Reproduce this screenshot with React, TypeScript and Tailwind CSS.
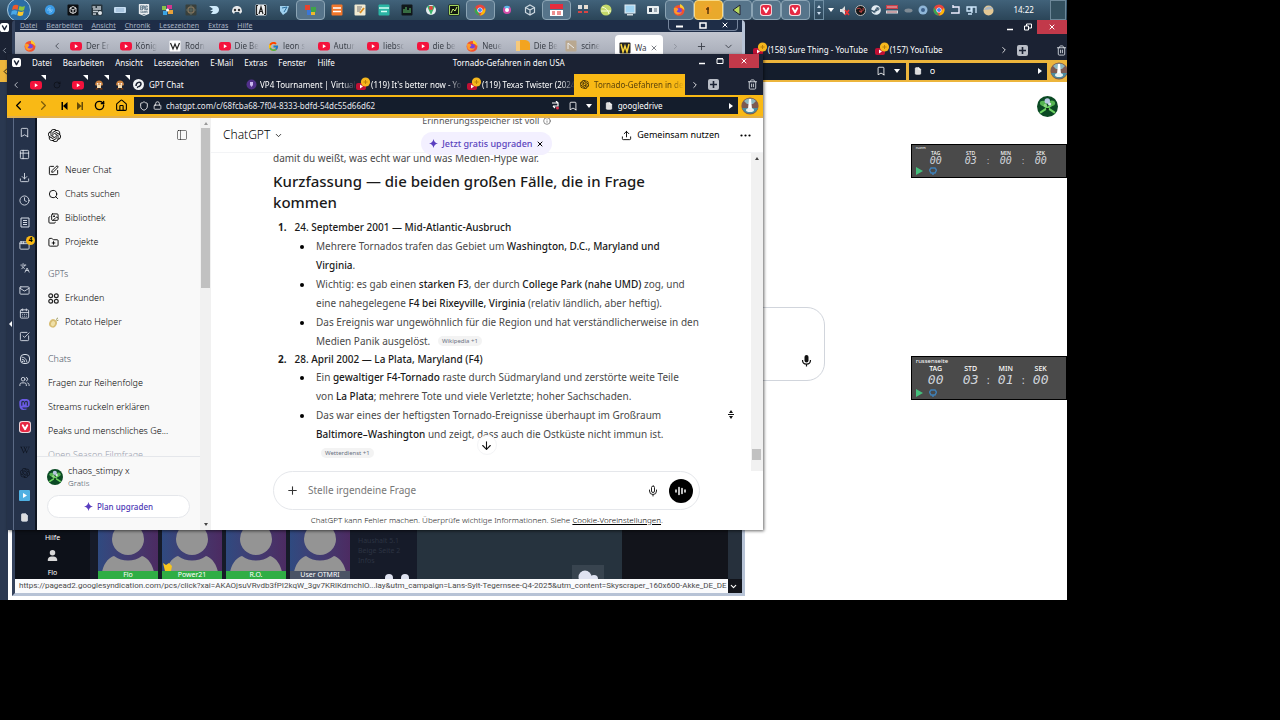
import type { ReactNode } from 'react';
import {
  AppWindow,
  ArrowDown,
  Bookmark,
  CalendarDays,
  CheckSquare,
  ChevronDown,
  ChevronLeft,
  ChevronRight,
  Clock,
  Download,
  File,
  FolderPlus,
  Home,
  Images,
  Info,
  Languages,
  Lock,
  Mail,
  Mic,
  PanelLeft,
  Plus,
  RotateCw,
  Rss,
  Search,
  Shield,
  SquarePen,
  Table2,
  Trash2,
  Upload,
  Users,
  X,
} from 'lucide-react';
import { SiEpicgames, SiMastodon, SiOpenai } from 'react-icons/si';
import { FaSteam, FaWikipediaW, FaUser } from 'react-icons/fa6';
import { FcGoogle } from 'react-icons/fc';

function YouTube({ size = 12 }: { size?: number }) {
  return (
    <svg width={size} height={size} viewBox="0 0 12 12" className="shrink-0">
      <rect x="0" y="2" width="12" height="8.4" rx="2.4" fill="#f4123c" />
      <path d="M4.8 4.2 8 6.2 4.8 8.2z" fill="#fff" />
    </svg>
  );
}

function Firefox() {
  return (
    <svg width="12" height="12" viewBox="0 0 12 12" className="shrink-0">
      <circle cx="6" cy="6.4" r="5.4" fill="#f4502c" />
      <path d="M7 0c2.6 1 4.6 3.4 4.4 6.6C9.6 4 8.4 4 7 3.6z" fill="#ffca2c" />
      <circle cx="6" cy="7" r="2.9" fill="#7542e0" />
      <path d="M.8 4.2C2 3.6 4 3.6 5.4 5.4L3.6 7.6C5 9 7.6 9 9 7c0 3-5.4 5-7.6 1.6z" fill="#ff9a2a" />
    </svg>
  );
}

function Chrome() {
  return (
    <svg width="12" height="12" viewBox="0 0 12 12" className="shrink-0">
      <circle cx="6" cy="6" r="5.5" fill="#e8453c" />
      <path d="M1.2 3.3 6 11.5A5.5 5.5 0 0 1 1.2 3.3z" fill="#34a853" />
      <path d="M11 3.8A5.5 5.5 0 0 1 6 11.5L8.6 7z" fill="#fbbc05" />
      <circle cx="6" cy="6" r="2.6" fill="#fff" />
      <circle cx="6" cy="6" r="2" fill="#4285f4" />
    </svg>
  );
}

function VivaldiTile() {
  return (
    <svg width="12" height="12" viewBox="0 0 13 13" className="shrink-0">
      <rect width="13" height="13" rx="3.5" fill="#f3dde0" />
      <rect x="1" y="1" width="11" height="11" rx="3" fill="#e62843" />
      <path d="M4 4.6 6.6 9 9 4.6" stroke="#fff" strokeWidth="2" strokeLinecap="round" strokeLinejoin="round" fill="none" />
    </svg>
  );
}

function VivaldiMark() {
  return (
    <svg width="9" height="9" viewBox="0 0 9 9" className="shrink-0">
      <rect width="9" height="9" rx="2.6" fill="#fff" />
      <path d="M2.5 3 4.5 6.6 6.5 3" stroke="#1b2233" strokeWidth="1.5" strokeLinecap="round" strokeLinejoin="round" fill="none" />
    </svg>
  );
}

// YouTube tab icon with the round yellow notification dot
function YouTubeAlert() {
  return (
    <svg width="16" height="16" viewBox="0 0 16 16" className="shrink-0">
      <rect x="1" y="6" width="10" height="7" rx="2" fill="#c01034" />
      <path d="M5 7.6 8 9.5 5 11.4z" fill="#fff" />
      <circle cx="10.5" cy="5" r="4.6" fill="#f6b71d" />
      <path d="M10.5 3v4M8.5 5h4" stroke="#b97f08" strokeWidth="1" />
    </svg>
  );
}

function Goomba() {
  return (
    <svg width="10" height="10" viewBox="0 0 10 10" className="shrink-0">
      <path d="M1 5C1 2 3 .6 5 .6S9 2 9 5c0 1-8 1-8 0z" fill="#c9803f" />
      <rect x="3" y="5" width="4" height="3" fill="#f5dcb0" />
      <path d="M1.4 9.4c0-2 3-2 3 0zM5.6 9.4c0-2 3-2 3 0z" fill="#7a3d12" />
      <circle cx="3.6" cy="3.8" r=".9" fill="#fff" />
      <circle cx="6.4" cy="3.8" r=".9" fill="#fff" />
    </svg>
  );
}

function Skull({ size = 20 }: { size?: number }) {
  return (
    <svg width={size} height={size} viewBox="0 0 20 20" className="shrink-0">
      <circle cx="10" cy="10" r="10" fill="#0b4a24" />
      <path d="M3.5 15.5 15 8M5 8l11.5 7.5" stroke="#6fd463" strokeWidth="2" strokeLinecap="round" />
      <ellipse cx="5.8" cy="6.8" rx="3" ry="2.2" fill="#56b552" />
      <ellipse cx="14.2" cy="6.8" rx="3" ry="2.4" fill="#56b552" />
      <circle cx="9.8" cy="4.8" r="2.6" fill="#b9c8e2" />
      <circle cx="12" cy="7.6" r="1.5" fill="#dbe4ef" />
      <circle cx="8" cy="9" r="1.6" fill="#8fd685" />
      <path d="M8.5 11.5h3l-.5 2h-2z" fill="#0d2e18" />
    </svg>
  );
}

function Lighthouse() {
  return (
    <svg width="18" height="18" viewBox="0 0 18 18" className="shrink-0">
      <circle cx="9" cy="9" r="8.6" fill="#7c5a52" />
      <path d="M1 11a8.6 8.6 0 0 0 16 0z" fill="#4b8ca0" />
      <path d="M3 4a8.6 8.6 0 0 1 12 0L12 7H6z" fill="#8eb7bf" />
      <path d="M8 2h2l1 10H7z" fill="#fff" />
      <ellipse cx="9" cy="13" rx="4" ry="2" fill="#e8f0f0" />
    </svg>
  );
}

function Spark({ size = 9 }: { size?: number }) {
  return (
    <svg width={size} height={size} viewBox="0 0 10 10" fill="#5a3fc0" className="shrink-0">
      <path d="M5 0c.7 3.2 1.8 4.3 5 5-3.2.7-4.3 1.8-5 5-.7-3.2-1.8-4.3-5-5 3.2-.7 4.3-1.8 5-5z" />
    </svg>
  );
}

function Potato() {
  return (
    <svg width="11" height="11" viewBox="0 0 11 11" className="shrink-0">
      <ellipse cx="5" cy="6.4" rx="3.8" ry="4.2" transform="rotate(25 5 6.4)" fill="#d8bd73" />
      <ellipse cx="5" cy="6.6" rx="2" ry="2.6" transform="rotate(25 5 6.6)" fill="#efe0a8" />
      <path d="M8 2.6 10 .8M8.6 3.6l1.8-.4" stroke="#8b8a4a" strokeWidth=".9" />
    </svg>
  );
}

function FourDots() {
  return (
    <svg width="11" height="11" viewBox="0 0 11 11" fill="none" stroke="#222" strokeWidth="1.2" className="shrink-0">
      <circle cx="2.7" cy="2.7" r="1.9" />
      <circle cx="8.3" cy="2.7" r="1.9" />
      <circle cx="2.7" cy="8.3" r="1.9" />
      <circle cx="8.3" cy="8.3" r="1.9" />
    </svg>
  );
}

// filled grey square with a dark plus, the "new tab" button
function NewTab() {
  return (
    <svg width="11" height="11" viewBox="0 0 11 11" className="shrink-0">
      <rect width="11" height="11" rx="2" fill="#b9bdc6" />
      <path d="M5.5 2v7M2 5.5h7" stroke="#1b2233" strokeWidth="1.6" />
    </svg>
  );
}

function ReadingList() {
  return (
    <svg width="10" height="11" viewBox="0 0 10 11" fill="none" stroke="currentColor">
      <path d="M1 1h8v9H1z" />
      <path d="M3 3.5h4M3 5.5h4M3 7.5h4" />
    </svg>
  );
}

function SkipIcon({ forward }: { forward?: boolean }) {
  return forward ? (
    <svg width="7" height="8" className="opacity-60"><path d="M0 0v8l4.5-4zM4.500 0h1.500v8H4.500z" /></svg>
  ) : (
    <svg width="7" height="8"><path d="M6.500 0v8L2 4zM.5 0H2v8H.5z" /></svg>
  );
}

function Tile({ bg, children }: { bg: string; children?: ReactNode }) {
  return (
    <svg width="12" height="12" viewBox="0 0 12 12" className="shrink-0">
      <rect x=".5" y=".5" width="11" height="11" rx="1" fill={bg} />
      {children}
    </svg>
  );
}

const taskbarIcons: { icon: ReactNode; active?: boolean; warn?: boolean }[] = [
  { icon: <svg width="12" height="12"><circle cx="6" cy="6" r="5" fill="#3b9be6" /><path d="M3 6h6M6 3v6M4 4l4 4" stroke="#7fc2f5" /></svg> },
  { icon: <Tile bg="#0c0f12"><path d="M6 2.5 9 4v4L6 9.5 3 8V4zM6 6v3M6 6l3-2M6 6 3 4" stroke="#ddd" fill="none" /></Tile> },
  { icon: <Tile bg="#26333b"><path d="M1.5 3h3M6 3h4M2 5h8M2 7.5h5M2 10h3" stroke="#c3ccd2" strokeWidth="1.3" /><circle cx="9" cy="9" r="2" fill="#dfe6ea" /></Tile> },
  { icon: <svg width="12" height="12"><rect y="3" width="12" height="6" rx="1" fill="#c5dcf0" /><path d="M2 5h8M2 7h8" stroke="#8fb0cf" /></svg> },
  { icon: <SiEpicgames size={12} color="#e8ecef" /> },
  { icon: <svg width="13" height="12"><path d="M1 2h4v4H1z" fill="#8ac34a" /><path d="M6 1h5v4H6z" fill="#d4358e" /><path d="M2 7h4v4H2z" fill="#3aa3e3" /><path d="M7 6h5v4H7z" fill="#e9a13a" /><circle cx="6.500" cy="6" r="1.500" fill="#fff" /></svg> },
  { icon: <Tile bg="#39403c"><circle cx="6" cy="6" r="3" stroke="#7e705a" fill="none" strokeWidth="1.500" /><path d="M1 6h10M6 1v10" stroke="#5e6a63" /></Tile> },
  { icon: <svg width="12" height="12"><path d="M1 2h6c3 0 4 2 4 4s-2 4-5 4H3l2-3H2l3-2z" fill="#cfeafb" /></svg> },
  { icon: <svg width="12" height="12"><path d="M1 8c0-4 2-6 5-6s5 2 5 6l-2 2-1-2H4l-1 2z" fill="#e6e8ea" /><circle cx="4" cy="6" r="1.200" fill="#333" /><circle cx="8" cy="6" r="1.200" fill="#333" /></svg> },
  { icon: <Tile bg="#eceeef"><path d="M4 10 6 3l2 7M4.500 7.500h3M3 1.500H1.500v9H3M9 1.500h1.500v9H9" stroke="#222" fill="none" strokeWidth="1.200" /></Tile> },
  { icon: <svg width="12" height="12"><path d="M2 2h9L9 8 5 11 2 7z" fill="#9fd0ee" /><path d="m4 4 5-1-3 5" stroke="#2d6e9c" fill="none" /></svg> },
  { icon: <svg width="13" height="12"><path d="M1 1h5v5H1z" fill="#e5432f" /><path d="M7 3h5v5H7z" fill="#3fa447" /><path d="M3 6h4v5H3z" fill="#3a76d8" /><path d="M7 8h4v3H7z" fill="#efb72c" /></svg>, active: true },
  { icon: <Tile bg="#f0762a"><path d="M2 4h8M2 7.500h8" stroke="#fff" strokeWidth="1.400" /></Tile> },
  { icon: <Tile bg="#f0ead2"><path d="M3 3h5M3 5h4M3 7h3" stroke="#777" /><path d="m6 9 4-5" stroke="#d98b1e" strokeWidth="1.800" /></Tile> },
  { icon: <Tile bg="#2ab5a4"><path d="M1 4h10M3 7.500h6" stroke="#d3fff6" strokeWidth="1.300" /></Tile> },
  { icon: <Tile bg="#10171a"><path d="M3 9V5M5 9V3M7 9V6M9 9V4" stroke="#5fc36b" /></Tile> },
  { icon: <svg width="12" height="12"><circle cx="6" cy="6" r="5" fill="#e8eef0" /><path d="M2 2h8L6 11z" fill="#3cb46b" /><circle cx="6" cy="4" r="2" fill="#e2463c" /></svg> },
  { icon: <Tile bg="#11180f"><path d="M1.500 1.500h9v9h-9z" stroke="#a4d65a" fill="none" /><path d="M3 9 5 5l2 2 2-4" stroke="#c8ef77" fill="none" /></Tile> },
  { icon: <Chrome />, active: true },
  { icon: <svg width="12" height="12"><circle cx="6" cy="6" r="4" fill="#d44ca8" /><path d="M3 3a4 4 0 0 1 6 0L6 6z" fill="#58b9e8" /><circle cx="6" cy="6" r="2" fill="#fff" /></svg> },
  { icon: <svg width="12" height="12"><path d="m6 1 4.500 2.500v5L6 11 1.500 8.500v-5zM6 6v5M6 6l4.500-2.500M6 6 1.500 3.500" stroke="#cdd8e0" fill="none" strokeWidth="1.200" /></svg> },
  { icon: <svg width="13" height="12"><rect width="13" height="5" fill="#e62c3c" /><rect y="6" width="13" height="6" fill="#fff" /><path d="M2 8h3M7 8h4M2 10h3M7 10h4" stroke="#d22" /></svg>, active: true },
  { icon: <svg width="12" height="12"><rect x="1" y="1" width="4" height="4" fill="#ddd" /><rect x="7" y="1" width="4" height="4" fill="#e8ddd0" /><path d="M1 8h4M7 8h4" stroke="#d84444" strokeWidth="2" /></svg> },
  { icon: <svg width="12" height="12"><circle cx="6" cy="6" r="5.500" fill="#c3d86a" /><path d="M2 3c4 1 6 3 7 7M1 7h10" stroke="#f6ffd8" fill="none" /></svg> },
  { icon: <svg width="12" height="12"><rect x="1" y="1" width="10" height="8" fill="#9fd4f2" stroke="#e5eef3" /><rect x="3" y="10" width="6" height="1.500" fill="#cfd8dc" /></svg> },
  { icon: <svg width="12" height="12"><rect y="2" width="12" height="8" rx="1" fill="#e8eef0" /><rect x="2" y="4" width="3" height="4" fill="#345" /><path d="M7 5h3M7 7h3" stroke="#567" /></svg> },
  { icon: <Firefox />, active: true },
  { icon: <svg width="12" height="12"><circle cx="6" cy="5" r="4" fill="#f3a52e" /><path d="M6 3v7M4 5h3" stroke="#5a3608" strokeWidth="1.500" /></svg>, active: true, warn: true },
  { icon: <svg width="12" height="12"><path d="M9 1v10L2 6z" fill="#b6d95f" stroke="#223" /></svg>, active: true },
  { icon: <VivaldiTile />, active: true },
  { icon: <VivaldiTile />, active: true },
];

function Taskbar() {
  return (
    <header className="relative flex h-5 items-stretch bg-gradient-to-b from-[#41627a] to-[#2b4558] pr-px">
      <button aria-label="Start" className="flex w-[38px] items-center justify-center">
        <svg width="24" height="24" viewBox="0 0 24 24" className="shrink-0">
          <circle cx="12" cy="12" r="11.5" fill="#2c6ea6" stroke="#a7c8dd" />
          <path d="M6 8c2-1.500 3.500-1.500 5.500-.5L10.500 12c-2-1-3.500-1-5.500 0z" fill="#ee5a2a" />
          <path d="M12.500 8c2 1 3.500 1 5.500 0L17 12c-2 1.200-3.500 1-5.500 0z" fill="#8cc63e" />
          <path d="M4.800 13c2-1 3.500-1 5.500 0l-1 4c-2-1-3.500-1-5.500 0z" fill="#4aa8e8" />
          <path d="M11.300 13.200c2 1 3.500 1 5.500 0l-1 4c-2 1-3.500 1-5.500 0z" fill="#fbc82e" />
        </svg>
      </button>
      <div className="flex flex-1 items-stretch">
        {taskbarIcons.map(({ icon, active, warn }, i) => (
          <button
            key={i}
            aria-label={`App ${i + 1}`}
            className={
              warn
                ? 'flex w-[29px] items-center justify-center rounded-sm border border-[#f8dc8a] bg-[#e9a92c]'
                : active
                  ? 'flex w-[29px] items-center justify-center rounded-sm border border-[#8ba4b4] bg-[#56748a]'
                  : 'flex flex-1 items-center justify-center'
            }
          >
            {icon}
          </button>
        ))}
      </div>
      <div className="ml-1 flex w-[10px] flex-col items-center justify-between border border-[#6f8ea3] py-1">
        <svg width="4" height="3"><path d="M0 3 2 0l2 3z" fill="#cde" /></svg>
        <svg width="4" height="3"><path d="m0 0 2 3 2-3z" fill="#cde" /></svg>
      </div>
      <div className="flex w-[174px] items-center justify-between px-1">
        <svg width="6" height="4"><path d="M0 0h6L3 4z" fill="#fff" /></svg>
        <svg width="11" height="11"><path d="M1 4h2l3-3v9L3 7H1z" fill="#ddd" /><path d="m6 5 4 5m0-5-4 5" stroke="#e33" strokeWidth="1.600" /></svg>
        <svg width="11" height="11"><circle cx="5.500" cy="5.500" r="5" fill="#161616" stroke="#bbb" /><path d="M2 4c3-2 5 0 4 4M8 3C9 6 7 7 4 6" stroke="#c44" fill="none" /></svg>
        <FaSteam size={10} color="#e2ebf2" />
        <svg width="12" height="10"><rect width="12" height="4" fill="#c8404a" /><path d="M1 2h10" stroke="#e9b8bb" /><path d="M0 7h12" stroke="#d9dde0" strokeWidth="3" /><path d="M1 7h10" stroke="#b4636a" /></svg>
        <svg width="9" height="5"><ellipse cx="4.500" cy="2.500" rx="4" ry="2" fill="#7f8b95" /></svg>
        <svg width="10" height="10"><circle cx="5" cy="5" r="4.500" fill="#8fb6d8" /><circle cx="5" cy="5" r="2" fill="#3d618c" /></svg>
        <Chrome />
        <svg width="11" height="11"><path d="M3 2h6v6H1M3 0v3" stroke="#eef" strokeWidth="1.400" fill="none" /></svg>
        <svg width="11" height="11"><path d="M1 2h4v4H1zM6 8V2h4v6M2 9h4" stroke="#cde6fb" strokeWidth="1.300" fill="none" /></svg>
        <svg width="11" height="11"><circle cx="5.500" cy="5.500" r="5" fill="#e4c894" /><path d="M1 5a5 5 0 0 1 9-1z" fill="#a9b7c6" /></svg>
      </div>
      <time className="w-[52px] self-center text-center text-[8px] text-white">14:22</time>
      <div className="w-4 border border-[#6c8798] bg-[#33505f]" />
    </header>
  );
}

function WindowButtons({ restore }: { restore?: boolean }) {
  return (
    <div className="flex items-start text-white">
      <button aria-label="Minimieren" className="flex h-[14px] w-4 items-center justify-center">
        <svg width="7" height="7"><path d="M0 5.500h6" stroke="#fff" strokeWidth="1.500" /></svg>
      </button>
      <button aria-label="Maximieren" className="flex h-[14px] w-[18px] items-center justify-center">
        <svg width="8" height="8" fill="none" stroke="#fff">
          {restore ? <path d="M.5 3h4v4h-4zM2.500 3V1h5v4H5" /> : <path d="M1 2h6v4.500H1zM1 1.500h6" />}
        </svg>
      </button>
      <button aria-label="Schließen" className="flex h-[14px] w-[30px] items-center justify-center bg-[#c2394a]">
        <X size={8} strokeWidth={3} />
      </button>
    </div>
  );
}

function Countdown({ name, values, small }: { name: string; values: string[]; small?: boolean }) {
  const labels = ['TAG', 'STD', 'MIN', 'SEK'];
  return (
    <section
      className={
        small
          ? 'mt-[27px] h-[34px] w-full border border-black bg-[#4a4a4a] px-1 text-[5px] leading-[6px] text-white'
          : 'mt-[178px] h-11 w-full border border-black bg-[#4a4a4a] px-1 text-[7px] leading-[8px] text-white'
      }
    >
      <h2 className={small ? 'text-[4px] leading-[5px]' : 'text-[6px] leading-[8px]'}>{name}</h2>
      <div className="flex items-end pl-[11px]">
        {labels.map((label, i) => (
          <div key={label} className="flex items-end">
            {i > 0 && (
              <span className={small ? 'w-[17px] text-center text-[8px] leading-[9px] text-gray-300' : 'w-[17px] text-center text-[11px] leading-[14px] text-gray-300'}>
                {i > 1 ? ':' : ''}
              </span>
            )}
            <div className="flex w-[18px] flex-col items-center">
              <span className="font-medium">{label}</span>
              <span
                className={
                  small
                    ? "font-['DejaVu_Sans_Mono',monospace] text-[10px] leading-[9px] text-gray-300 italic"
                    : "font-['DejaVu_Sans_Mono',monospace] text-[13px] leading-[14px] text-gray-300 italic"
                }
              >
                {values[i]}
              </span>
            </div>
          </div>
        ))}
      </div>
      <div className={small ? 'mt-[2px] flex gap-[5px]' : 'mt-[2px] flex gap-[5px]'}>
        <svg width="8" height="8"><path d="M0 0v8l7-4z" fill="#45c07d" /></svg>
        <svg width="8" height="8"><path d="M2 1h4l1.500 2L6 6H2L.5 3zM4 6v2" fill="none" stroke="#3f7fb5" strokeWidth="1.500" /></svg>
      </div>
    </section>
  );
}

function BackPage() {
  return (
    <main className="flex flex-1 justify-end bg-white">
      <div className="mt-[225px] mr-[86px] flex h-[74px] flex-1 items-end justify-end rounded-[18px] border border-gray-300 p-3">
        <button aria-label="Diktieren">
          <svg width="11" height="14" viewBox="0 0 11 14">
            <rect x="3.5" y="1" width="4" height="7.5" rx="2" fill="#111" />
            <path d="M1.500 6c0 5.500 8 5.500 8 0M5.500 10v2.500" stroke="#111" strokeWidth="1.200" fill="none" />
          </svg>
        </button>
      </div>
      <div className="flex w-[156px] flex-col items-end">
        <button aria-label="Profil" className="mt-[14px] mr-[9px]">
          <Skull size={21} />
        </button>
        <Countdown name="ruem" values={['00', '03', '00', '00']} small />
        <Countdown name="russenseite" values={['00', '03', '01', '00']} />
      </div>
    </main>
  );
}

function BackBrowser() {
  return (
    <section className="absolute inset-x-0 top-5 bottom-0 flex flex-col bg-[#1b2233] text-white">
      <div className="flex h-5 shrink-0 justify-between">
        <div className="pt-[3px]">
          <VivaldiMark />
        </div>
        <WindowButtons restore />
      </div>
      <div className="flex h-5 shrink-0 items-center text-[8px]">
        <ChevronLeft size={9} className="mr-auto text-gray-400" />
        <a href="#sure" className="flex w-[122px] items-center whitespace-nowrap">
          <YouTubeAlert />
          (158) Sure Thing - YouTube
        </a>
        <a href="#yt" className="flex w-[125px] items-center whitespace-nowrap">
          <YouTubeAlert />
          (157) YouTube
        </a>
        <ChevronRight size={10} />
        <span className="ml-2">
          <NewTab />
        </span>
        <Trash2 size={11} className="ml-7 text-gray-300" />
      </div>
      <div className="flex h-[22px] shrink-0 items-center gap-[3px] bg-[#ecb53c]">
        <div className="flex h-[17px] flex-1 items-center gap-2 pr-1">
          <ChevronLeft size={11} color="#111" className="mr-auto" />
        </div>
        <div className="flex h-[17px] w-[300px] items-center justify-end gap-2 bg-[#141d2c] pr-[6px]">
          <Bookmark size={10} />
          <svg width="6" height="4"><path d="M0 0h6L3 4z" fill="#fff" /></svg>
        </div>
        <div className="flex h-[17px] w-[138px] items-center gap-2 bg-[#141d2c] px-[5px]">
          <File size={8} fill="#ddd" />
          <input aria-label="Suche" defaultValue="o" className="w-0 flex-1 bg-transparent text-[9px] outline-none" />
          <svg width="4" height="6"><path d="M0 0v6l4-3z" fill="#fff" /></svg>
        </div>
        <div className="w-[17px] overflow-hidden">
          <Lighthouse />
        </div>
      </div>
      <div className="flex flex-1">
        <div className="w-2 bg-[#2a3850]" />
        <BackPage />
      </div>
    </section>
  );
}

const firefoxTabs: { icon: ReactNode; title: string }[] = [
  { icon: <YouTube />, title: 'Der Er' },
  { icon: <YouTube />, title: 'König' },
  { icon: <Tile bg="#fff"><path d="m1.500 3 2.500 6 2-5 2 5 2.500-6" stroke="#222" fill="none" strokeWidth="1.200" /></Tile>, title: 'Rodn' },
  { icon: <YouTube />, title: 'Die Be' },
  { icon: <FcGoogle size={11} className="shrink-0" />, title: 'leon s' },
  { icon: <YouTube />, title: 'Autur' },
  { icon: <YouTube />, title: 'liebsc' },
  { icon: <YouTube />, title: 'die be' },
  { icon: <Firefox />, title: 'Neue' },
  { icon: <svg width="14" height="12" className="shrink-0"><path d="M4 0h5a5 5 0 0 1 5 6v4H4z" fill="#f3a41f" /><path d="M0 1h4v10H0z" fill="#f6c97a" /></svg>, title: 'Die Be' },
  { icon: <Tile bg="#b9a890"><path d="M3 9V3l6 5" stroke="#eee" fill="none" /></Tile>, title: 'scine' },
];

const members = [
  { name: 'Flo', label: 'bg-[#2fae45]' },
  { name: 'Power21', label: 'bg-[#2fae45]', duck: true },
  { name: 'R.O.', label: 'bg-[#2fae45]' },
  { name: 'User OTMRI', label: 'bg-[#4a5366]' },
];

function FirefoxWindow() {
  return (
    <section className="absolute top-5 right-[322px] bottom-1 left-3 flex flex-col rounded-t-sm border-r-[3px] border-b-[3px] border-l-[3px] border-r-[#b7c3d6] border-b-[#b7c3d6] border-l-[#34425c] bg-[#0d1119] text-white">
      <div className="flex h-3 shrink-0 justify-between bg-[#1e2d47]">
        <nav className="flex gap-[9px] pl-[5px] text-[7px] leading-3 text-[#a9b4c4]">
          {['Datei', 'Bearbeiten', 'Ansicht', 'Chronik', 'Lesezeichen', 'Extras', 'Hilfe'].map((item) => (
            <a key={item} href="#menu" className="underline">
              {item}
            </a>
          ))}
        </nav>
        <div className="mr-1 flex h-[11px] w-[70px] items-center justify-around rounded-b border border-t-0 border-[#76859d]">
          <svg width="8" height="6"><path d="M0 4.500h7" stroke="#fff" strokeWidth="2" /></svg>
          <svg width="8" height="7"><path d="M1 1h6v5H1z" stroke="#fff" strokeWidth="1.500" fill="none" /></svg>
          <X size={8} strokeWidth={3} />
        </div>
      </div>
      <div className="flex h-7 shrink-0 items-center bg-gradient-to-b from-[#c2c6d0] to-[#a3a8b4] pl-[9px] text-[8px] text-[#3b4049]">
        <Firefox />
        <ChevronLeft size={10} className="mr-2 ml-4" />
        {firefoxTabs.map(({ icon, title }, i) => (
          <a key={i} href="#tab" className="flex flex-1 items-center gap-1 overflow-hidden whitespace-nowrap">
            {icon}
            <span className="mask-r-from-60%">{title}</span>
          </a>
        ))}
        <a href="#tab" className="flex h-[25px] w-12 items-center gap-1 self-end rounded-t bg-white px-1">
          <Tile bg="#222"><path d="m2 2 2 8 2-6 2 6 2-8" stroke="#f7d33b" strokeWidth="1.500" fill="none" /></Tile>
          Wa
          <X size={8} className="shrink-0" />
        </a>
        <ChevronRight size={9} className="ml-2 opacity-40" />
        <Plus size={11} className="ml-4" />
        <ChevronDown size={11} className="mr-2 ml-4" />
      </div>
      <div className="flex-1" />
      <div className="flex h-[49px] shrink-0 bg-[#161b29] text-[7px] leading-[8px]">
        <div className="flex w-[75px] flex-col items-center gap-1 bg-[#0d1119] pt-1">
          <span>Hilfe</span>
          <FaUser size={11} color="#d8d8d8" className="mt-1" />
          <span className="mt-1">Flo</span>
        </div>
        <div className="ml-2 flex gap-1">
          {members.map(({ name, label, duck }) => (
            <figure key={name} className="flex w-[60px] flex-col bg-gradient-to-r from-[#2f4a80] to-[#4c2b62]">
              <svg viewBox="0 0 60 41" className="h-[41px] w-[60px]">
                <circle cx="30" cy="9" r="16" fill="#949494" />
                <path d="M4 42c2-10 8-15 12-16 8 6 20 6 28 0 4 1 10 6 12 16z" fill="#949494" />
                {duck && <path d="M1 33l3 2 3-2 3 3-1 5H3z" fill="#f6c51e" />}
              </svg>
              <figcaption className={`h-2 text-center ${label}`}>{name}</figcaption>
            </figure>
          ))}
        </div>
        <div className="ml-2 flex w-[59px] flex-col text-[7px] leading-[10px] text-[#2c3342]">
          <span className="mt-[6px]">Haushalt 5.1</span>
          <span>Beige Seite 2</span>
          <span>Infos</span>
          <svg width="26" height="6" className="mt-auto ml-[26px]" fill="#dfe3f1">
            <circle cx="5" cy="5" r="4" />
            <circle cx="21" cy="5" r="4" />
          </svg>
        </div>
        <div className="flex w-[205px] items-end justify-end bg-[#26333e]">
          <svg width="32" height="14" className="mr-[18px] bg-[#38444f]">
            <circle cx="13" cy="12" r="6.500" fill="#dfe3f1" />
            <circle cx="22" cy="14" r="4" fill="#dfe3f1" />
          </svg>
        </div>
        <div className="flex-1 bg-[#12141b]" />
        <div className="w-[14px] bg-[#26303c]" />
      </div>
      <div className="flex h-[14px] shrink-0 bg-[#12141b]">
        <p className="flex-1 bg-[#fafbfd] pl-1 font-['Roboto',sans-serif] text-[8px] leading-[14px] whitespace-nowrap text-[#4a4a4a]">
          https://pagead2.googlesyndication.com/pcs/click?xai=AKAOjsuVRvdb3fPI2kqW_3gv7KRlKdmchIO...lay&amp;utm_campaign=Lans-Sylt-Tegernsee-Q4-2025&amp;utm_content=Skyscraper_160x600-Akke_DE_DE
        </p>
        <ChevronDown size={9} strokeWidth={3} className="mr-1 ml-px self-center" />
      </div>
    </section>
  );
}

const pinnedTabs = [
  { icon: <YouTube />, mark: true },
  { icon: <RotateCw size={8} color="#0a0d14" />, mark: false },
  { icon: <YouTube />, mark: true },
  { icon: <Goomba />, mark: true },
  { icon: <Goomba />, mark: true },
];

function FrontTitleBar() {
  return (
    <div className="flex h-5 shrink-0 justify-between text-[8px] leading-[17px]">
      <nav className="flex gap-[11px] pl-[5px]">
        <span className="flex h-[17px] items-center">
          <VivaldiMark />
        </span>
        {['Datei', 'Bearbeiten', 'Ansicht', 'Lesezeichen', 'E-Mail', 'Extras', 'Fenster', 'Hilfe'].map((item) => (
          <a key={item} href="#menu">
            {item}
          </a>
        ))}
      </nav>
      <div className="flex items-start gap-[130px] pr-1">
        <h1>Tornado-Gefahren in den USA</h1>
        <WindowButtons />
      </div>
    </div>
  );
}

function FrontTabs() {
  return (
    <div className="flex h-[21px] shrink-0 items-center text-[8px] whitespace-nowrap">
      <ChevronLeft size={10} className="mx-1 shrink-0 text-gray-300" />
      <div className="flex w-[108px]">
        {pinnedTabs.map(({ icon, mark }, i) => (
          <a key={i} href="#pinned" aria-label={`Angeheftet ${i + 1}`} className="relative flex h-5 w-[21px] items-center justify-center">
            {icon}
            {mark && (
              <svg width="5" height="5" className="absolute top-0 right-0"><path d="M0 0h5v5z" fill="#fff" /></svg>
            )}
          </a>
        ))}
      </div>
      <a href="#gpt" className="flex w-[113px] items-center gap-[5px]">
        <svg width="11" height="11"><circle cx="5.500" cy="5.500" r="5.500" fill="#f1f3f5" /><path d="M3 7c0-4 5-5 5-2S3 8 5 8.500" stroke="#1b2233" strokeWidth="1.500" fill="none" /></svg>
        GPT Chat
      </a>
      <a href="#vp4" className="flex w-[109px] items-center gap-[3px]">
        <svg width="11" height="11" className="shrink-0"><circle cx="5.500" cy="5.500" r="5" fill="#51308a" /><path d="M4 3h3v3L5.500 8 4 6z" fill="#cbb8ef" /></svg>
        <span className="mask-r-from-85%">VP4 Tournament | Virtual</span>
      </a>
      <a href="#better" className="flex w-[111px] items-center">
        <YouTubeAlert />
        <span className="mask-r-from-85%">(119) It's better now - Yo</span>
      </a>
      <a href="#texas" className="flex w-[108px] items-center">
        <YouTubeAlert />
        <span className="mask-r-from-85%">(119) Texas Twister (2024</span>
      </a>
      <a href="#tornado" className="flex w-[111px] items-center gap-[5px] self-stretch bg-[#f9b915] px-[6px] text-[#5b430b]">
        <SiOpenai size={9} className="shrink-0 text-black" />
        <span className="mask-r-from-85%">Tornado-Gefahren in de</span>
      </a>
      <ChevronRight size={10} className="ml-[5px] shrink-0" />
      <span className="ml-2">
        <NewTab />
      </span>
      <Trash2 size={11} className="mr-[5px] ml-auto shrink-0 text-gray-300" />
    </div>
  );
}

function AddressBar() {
  return (
    <div className="flex h-[23px] shrink-0 items-center border-b-2 border-[#e3b04a] bg-[#f9b915] text-black">
      <div className="flex w-[127px] items-center justify-between pr-[6px] pl-1">
        <button aria-label="Zurück"><ChevronLeft size={15} strokeWidth={2} /></button>
        <button aria-label="Vor"><ChevronRight size={15} className="opacity-50" /></button>
        <button aria-label="Anfang"><SkipIcon /></button>
        <button aria-label="Ende"><SkipIcon forward /></button>
        <button aria-label="Neu laden"><RotateCw size={11} strokeWidth={3} /></button>
        <button aria-label="Startseite"><Home size={13} /></button>
      </div>
      <div className="flex h-[17px] flex-1 items-center gap-1 bg-[#141d2c] px-[5px] text-white">
        <Shield size={10} />
        <Lock size={9} />
        <input
          aria-label="Adresse"
          defaultValue="chatgpt.com/c/68fcba68-7f04-8333-bdfd-54dc55d66d62"
          className="w-0 flex-1 bg-transparent text-[8px] text-gray-200 outline-none"
        />
        <svg width="9" height="9"><path d="M1 2h6v3H2M7 2 5 0M2 5l2 2" stroke="#fff" fill="none" strokeWidth="1.200" /><circle cx="6.500" cy="7" r="1.500" fill="#e0304c" /></svg>
        <Bookmark size={10} className="ml-1" />
        <svg width="6" height="4" className="ml-1"><path d="M0 0h6L3 4z" fill="#fff" /></svg>
      </div>
      <div className="ml-[3px] flex h-[17px] w-[138px] items-center gap-[5px] bg-[#141d2c] px-[5px] text-white">
        <File size={8} fill="#ddd" />
        <input aria-label="Suchen" defaultValue="googledrive" className="w-0 flex-1 bg-transparent text-[8px] outline-none" />
        <svg width="4" height="6"><path d="M0 0v6l4-3z" fill="#fff" /></svg>
      </div>
      <div className="flex w-[25px] justify-center">
        <Lighthouse />
      </div>
    </div>
  );
}

const panelIcons = [
  <Bookmark key="1" size={11} />,
  <Table2 key="2" size={11} />,
  <Download key="3" size={11} />,
  <Clock key="4" size={11} />,
  <ReadingList key="5" />,
  <AppWindow key="6" size={11} />,
  <Languages key="7" size={10} />,
  <Mail key="8" size={11} />,
  <CalendarDays key="9" size={11} />,
  <CheckSquare key="10" size={11} />,
  <span key="11" className="flex size-[10px] items-center justify-center rounded-sm border border-current"><Rss size={7} strokeWidth={3} /></span>,
  <Users key="12" size={11} />,
  <SiMastodon key="13" size={11} color="#6b5be6" />,
  <VivaldiTile key="14" />,
  <FaWikipediaW key="15" size={10} color="#0e1420" />,
  <SiOpenai key="16" size={10} color="#0e1420" />,
  <svg key="17" width="11" height="11"><rect width="11" height="11" rx="1" fill="#4fb0e2" /><path d="M4 3v5l4-2.500z" fill="#fff" /></svg>,
  <File key="18" size={9} fill="#ddd" />,
];

function SidePanel() {
  return (
    <aside className="flex w-[30px] shrink-0 bg-[#25324a] text-[#d6dce6]">
      <div className="flex w-[7px] items-center justify-center border-r border-[#5b6a85]">
        <svg width="3" height="6"><path d="M3 0v6L0 3z" fill="#fff" /></svg>
      </div>
      <div className="flex flex-1 flex-col items-center justify-between pt-2 pb-[6px]">
        {panelIcons.map((icon, i) => (
          <button key={i} aria-label={`Panel ${i + 1}`} className="relative flex h-3 items-center">
            {icon}
            {i === 5 && (
              <span className="absolute -top-1 -right-[5px] flex size-[9px] items-center justify-center rounded-full bg-[#f9b915] text-[7px] font-bold text-black">
                4
              </span>
            )}
          </button>
        ))}
      </div>
      <div className="w-[2px] bg-[#0e1420]" />
    </aside>
  );
}

function NavRow({ icon, children }: { icon?: ReactNode; children: ReactNode }) {
  return (
    <a href="#item" className="flex h-6 shrink-0 items-center gap-[6px]">
      {icon}
      {children}
    </a>
  );
}

function ChatSidebar() {
  return (
    <div className="flex w-[174px] shrink-0 bg-[#f9f9f9] text-[9px] font-light text-black">
      <div className="flex flex-1 flex-col overflow-hidden">
        <div className="flex h-[34px] items-center justify-between pr-3 pl-[11px]">
          <SiOpenai size={13} />
          <button aria-label="Seitenleiste schließen"><PanelLeft size={12} strokeWidth={1} /></button>
        </div>
        <nav className="flex flex-1 basis-0 flex-col overflow-hidden border-b border-gray-200 pt-[6px] pl-[11px]">
          <NavRow icon={<SquarePen size={11} strokeWidth={2} />}>Neuer Chat</NavRow>
          <NavRow icon={<Search size={11} strokeWidth={2} />}>Chats suchen</NavRow>
          <NavRow icon={<Images size={11} strokeWidth={2} />}>Bibliothek</NavRow>
          <NavRow icon={<FolderPlus size={11} strokeWidth={2} />}>Projekte</NavRow>
          <h2 className="mt-2 h-6 shrink-0 leading-6 text-gray-600">GPTs</h2>
          <NavRow icon={<FourDots />}>Erkunden</NavRow>
          <NavRow icon={<Potato />}>Potato Helper</NavRow>
          <h2 className="mt-[13px] h-6 shrink-0 leading-6 text-gray-600">Chats</h2>
          <NavRow>Fragen zur Reihenfolge</NavRow>
          <NavRow>Streams ruckeln erklären</NavRow>
          <NavRow>Peaks und menschliches Ge...</NavRow>
          <a href="#item" className="h-6 shrink-0 leading-6 text-gray-400">
            Open Season Filmfrage
          </a>
        </nav>
        <div className="flex h-[38px] items-center gap-[5px] pt-px pl-[10px]">
          <Skull size={16} />
          <div>
            <p className="leading-[12px]">chaos_stimpy x</p>
            <p className="text-[8px] leading-[11px] text-gray-600">Gratis</p>
          </div>
        </div>
        <button className="mx-[10px] mb-3 flex h-[23px] items-center justify-center gap-1 rounded-full border border-gray-200 bg-white text-[8px] font-medium text-[#4c38b5]">
          <Spark />
          Plan upgraden
        </button>
      </div>
      <div className="flex w-[11px] flex-col items-center bg-[#f1f1f1] py-1">
        <svg width="4" height="3"><path d="M0 3 2 0l2 3z" fill="#999" /></svg>
        <div className="mt-[3px] h-40 w-[9px] bg-[#c1c1c1]" />
        <svg width="4" height="3" className="mt-auto"><path d="m0 0 2 3 2-3z" fill="#444" /></svg>
      </div>
    </div>
  );
}

function B({ children }: { children: ReactNode }) {
  return <strong className="font-medium text-[#1a1a1a]">{children}</strong>;
}

function Source({ children }: { children: ReactNode }) {
  return (
    <button className="mx-[5px] rounded-full bg-[#f3f3f3] px-1 align-[2px] text-[6px] leading-[10px] text-gray-500">{children}</button>
  );
}

function Bullet({ children }: { children: ReactNode }) {
  return (
    <li className="flex">
      <span className="mt-2 mr-[12px] size-1 shrink-0 rounded-full bg-black" />
      <p>{children}</p>
    </li>
  );
}

function Answer() {
  return (
    <article className="flex flex-1 flex-col overflow-hidden pl-[62px] text-[10px] leading-[19px] whitespace-nowrap text-[#4a4a4a]">
      <p className="-mt-1 leading-[18px]">damit du weißt, was echt war und was Medien-Hype war.</p>
      <h2 className="mt-1 mb-[5px] text-[15px] leading-[21px] font-medium text-[#1a1a1a]">
        Kurzfassung — die beiden großen Fälle, die in Frage
        <br />
        kommen
      </h2>
      <ol>
        <li>
          <h3 className="pl-[5px] leading-[19px] font-medium text-[#1a1a1a]">
            <b className="mr-2">1.</b>
            24. September 2001 — Mid-Atlantic-Ausbruch
          </h3>
          <ul className="pl-[27px]">
            <Bullet>
              Mehrere Tornados trafen das Gebiet um <B>Washington, D.C., Maryland und</B>
              <br />
              <B>Virginia</B>.
            </Bullet>
            <Bullet>
              Wichtig: es gab einen <B>starken F3</B>, der durch <B>College Park (nahe UMD)</B> zog, und
              <br />
              eine nahegelegene <B>F4 bei Rixeyville, Virginia</B> (relativ ländlich, aber heftig).
            </Bullet>
            <Bullet>
              Das Ereignis war ungewöhnlich für die Region und hat verständlicherweise in den
              <br />
              Medien Panik ausgelöst. <Source>Wikipedia +1</Source>
            </Bullet>
          </ul>
        </li>
        <li>
          <h3 className="-mt-px pl-[5px] leading-[18px] font-medium text-[#1a1a1a]">
            <b className="mr-2">2.</b>
            28. April 2002 — La Plata, Maryland (F4)
          </h3>
          <ul className="pl-[27px]">
            <Bullet>
              Ein <B>gewaltiger F4-Tornado</B> raste durch Südmaryland und zerstörte weite Teile
              <br />
              von <B>La Plata</B>; mehrere Tote und viele Verletzte; hoher Sachschaden.
            </Bullet>
            <Bullet>
              Das war eines der heftigsten Tornado-Ereignisse überhaupt im Großraum
              <br />
              <B>Baltimore–Washington</B> und zeigt, dass auch die Ostküste nicht immun ist.
              <br />
              <Source>Wetterdienst +1</Source>
            </Bullet>
          </ul>
        </li>
      </ol>
    </article>
  );
}

function ChatMain() {
  return (
    <div className="flex flex-1 flex-col bg-white">
      <div className="relative z-10 flex h-[35px] shrink-0 items-center justify-between border-b border-gray-100 pr-3 pl-3">
        <button className="flex items-center gap-1 text-[12px] font-light text-black">
          ChatGPT
          <ChevronDown size={9} />
        </button>
        <div className="absolute inset-x-0 -top-[9px] flex flex-col items-center text-[9px]">
          <p className="flex h-[23px] items-center gap-1 text-[#555] [clip-path:inset(9px_0_0_0)]">
            Erinnerungsspeicher ist voll
            <Info size={8} />
          </p>
          <p className="flex h-[23px] items-center gap-1 rounded-full bg-[#f3f0ff] px-2 font-medium text-[#5b45bd]">
            <Spark />
            Jetzt gratis upgraden
            <button aria-label="Ausblenden" className="text-black"><X size={8} strokeWidth={3} /></button>
          </p>
        </div>
        <div className="flex items-center gap-5 text-[9px] text-black">
          <button className="flex items-center gap-[5px]">
            <Upload size={11} />
            Gemeinsam nutzen
          </button>
          <button aria-label="Mehr">
            <svg width="11" height="3"><circle cx="1.500" cy="1.500" r="1.100" /><circle cx="5.500" cy="1.500" r="1.100" /><circle cx="9.500" cy="1.500" r="1.100" /></svg>
          </button>
        </div>
      </div>
      <div className="relative flex h-[318px] shrink-0">
        <Answer />
        <button aria-label="Nach unten" className="absolute bottom-4 left-1/2 -ml-[10px] flex size-5 items-center justify-center rounded-full border border-gray-100 bg-white">
          <ArrowDown size={13} color="#111" />
        </button>
        <svg width="6" height="9" className="mt-[257px] mr-[17px] shrink-0"><path d="M1 3 3 0l2 3zM1 6h4L3 9zM0 4h6v1H0z" fill="#111" /></svg>
        <div className="flex w-3 flex-col items-center bg-[#f1f1f1] pt-1 pb-[11px]">
          <svg width="4" height="3"><path d="M0 3 2 0l2 3z" fill="#444" /></svg>
          <div className="mt-auto h-[11px] w-[9px] bg-[#c1c1c1]" />
        </div>
      </div>
      <form className="mr-[63px] ml-[62px] flex h-[39px] shrink-0 items-center rounded-full border border-gray-200 bg-white pr-[6px] pl-3">
        <button type="button" aria-label="Hinzufügen"><Plus size={13} strokeWidth={2} color="#333" /></button>
        <input aria-label="Frage" placeholder="Stelle irgendeine Frage" className="ml-[9px] w-0 flex-1 text-[10px] outline-none placeholder:text-[#777]" />
        <button type="button" aria-label="Diktieren" className="mr-[10px]"><Mic size={12} color="#222" /></button>
        <button type="button" aria-label="Sprachmodus" className="flex size-6 items-center justify-center rounded-full bg-black">
          <svg width="11" height="10" stroke="#fff" strokeWidth="1.500" strokeLinecap="round"><path d="M1 4v2M4 1.500v7M7 2.500v5M10 4v2" /></svg>
        </button>
      </form>
      <p className="mt-[3px] text-center text-[8px] leading-[14px] font-light text-[#222]">
        ChatGPT kann Fehler machen. Überprüfe wichtige Informationen. Siehe{' '}
        <a href="#cookies" className="text-black underline">
          Cookie-Voreinstellungen
        </a>
        .
      </p>
    </div>
  );
}

function FrontBrowser() {
  return (
    <section className="absolute top-[54px] right-[304px] bottom-[70px] left-[7px] flex flex-col overflow-hidden bg-[#1b2233] text-white shadow-[1px_1px_3px_rgba(0,0,0,0.6)]">
      <FrontTitleBar />
      <FrontTabs />
      <AddressBar />
      <div className="flex flex-1">
        <SidePanel />
        <ChatSidebar />
        <ChatMain />
      </div>
    </section>
  );
}

export default function App() {
  return (
    <div className="h-screen bg-black font-['Noto_Sans',sans-serif]">
      <div className="relative h-5/6 w-5/6 overflow-hidden bg-[#2a3850]">
        <Taskbar />
        <BackBrowser />
        <FirefoxWindow />
        <FrontBrowser />
      </div>
    </div>
  );
}
